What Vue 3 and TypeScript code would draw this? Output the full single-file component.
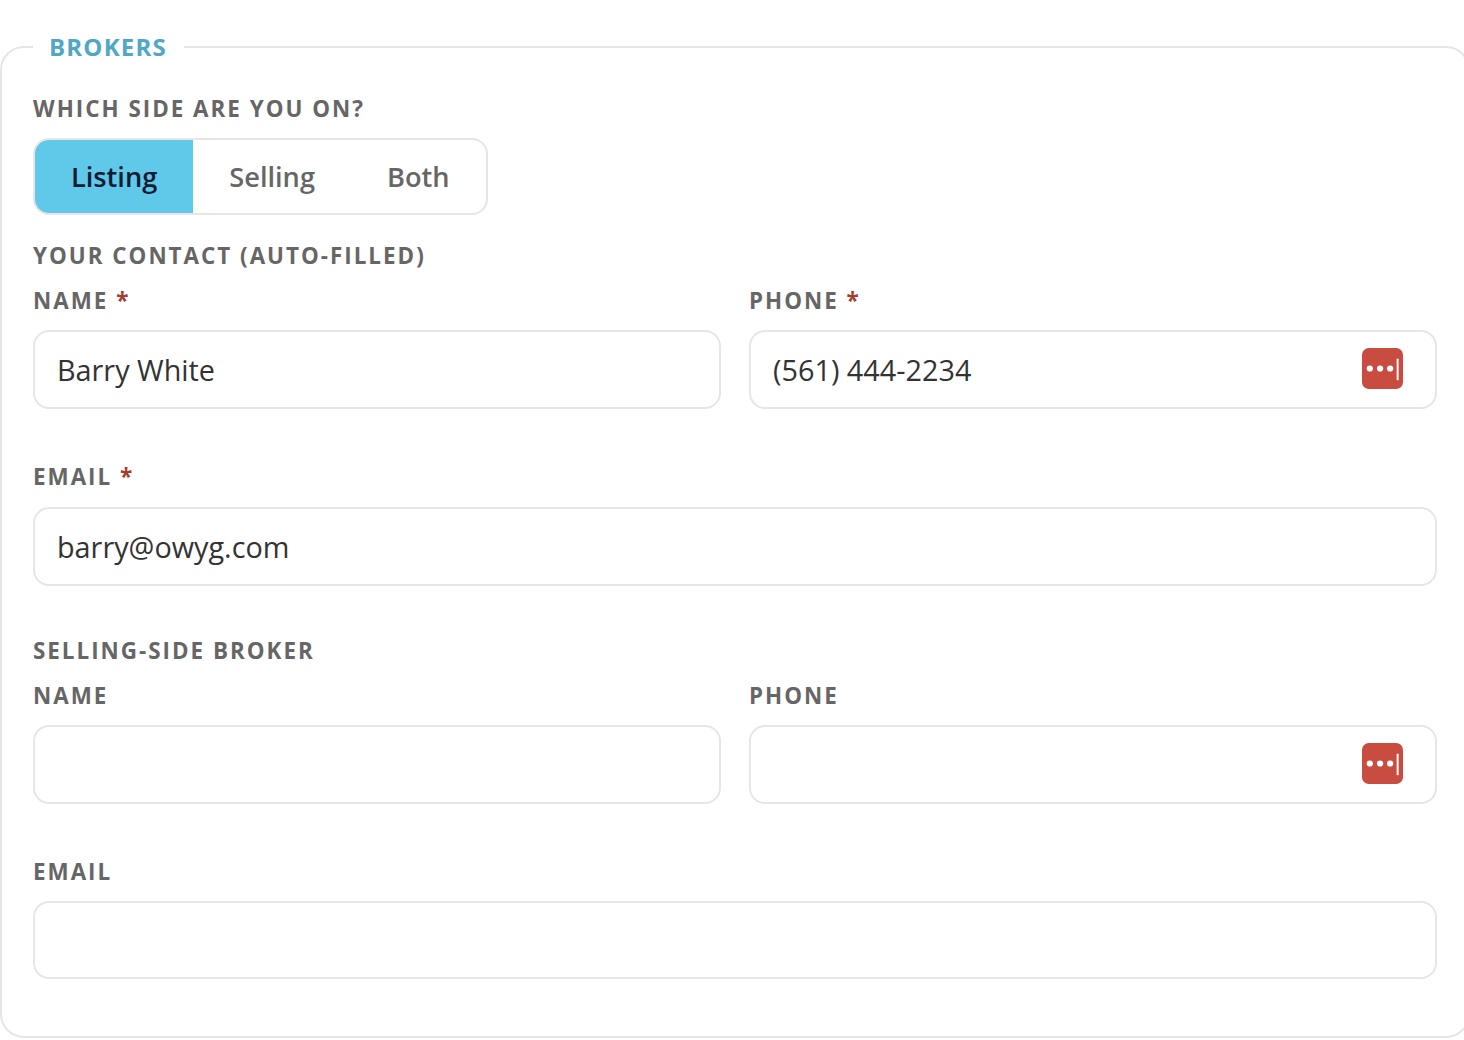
<script setup lang="ts">
const sides: string[] = ['Listing', 'Selling', 'Both']
</script>

<template>
  <div class="page">
    <fieldset class="panel">
      <legend class="legend">BROKERS</legend>
      <div class="label side-label">WHICH SIDE ARE YOU ON?</div>
      <div class="toggle">
        <span v-for="(s, i) in sides" :key="s" class="opt" :class="{ active: i === 0 }">{{ s }}</span>
      </div>

      <div class="label group">YOUR CONTACT (AUTO-FILLED)</div>
      <div class="row">
        <div class="field">
          <div class="label">NAME <span class="req">*</span></div>
          <div class="input">Barry White</div>
        </div>
        <div class="field">
          <div class="label">PHONE <span class="req">*</span></div>
          <div class="input">(561) 444-2234
            <svg class="lp" viewBox="0 0 42 42"><rect width="42" height="42" rx="7" fill="#c94c41"/><circle cx="8" cy="21" r="3.200" fill="#fff"/><circle cx="18.500" cy="21" r="3.200" fill="#fff"/><circle cx="28.800" cy="21" r="3.200" fill="#fff"/><rect x="35.500" y="11" width="2" height="22" fill="#fff"/></svg>
          </div>
        </div>
      </div>
      <div class="field wide first-email">
        <div class="label">EMAIL <span class="req">*</span></div>
        <div class="input">barry@owyg.com</div>
      </div>

      <div class="label group second">SELLING-SIDE BROKER</div>
      <div class="row">
        <div class="field">
          <div class="label">NAME</div>
          <div class="input"></div>
        </div>
        <div class="field">
          <div class="label">PHONE</div>
          <div class="input">
            <svg class="lp" viewBox="0 0 42 42"><rect width="42" height="42" rx="7" fill="#c94c41"/><circle cx="8" cy="21" r="3.200" fill="#fff"/><circle cx="18.500" cy="21" r="3.200" fill="#fff"/><circle cx="28.800" cy="21" r="3.200" fill="#fff"/><rect x="35.500" y="11" width="2" height="22" fill="#fff"/></svg>
          </div>
        </div>
      </div>
      <div class="field wide">
        <div class="label">EMAIL</div>
        <div class="input"></div>
      </div>
    </fieldset>
  </div>
</template>

<style>
html, body { margin: 0; background: #fff; overflow: hidden; }
</style>

<style scoped>
.page {
  width: 1464px;
  height: 1040px;
  overflow: hidden;
  font-family: "Open Sans", sans-serif;
  background: #fff;
  padding-top: 32px;
  box-sizing: border-box;
}
.panel {
  width: 1470px;
  height: 1006px;
  box-sizing: border-box;
  margin: 0;
  padding: 0 31px 0 31px;
  border: 2px solid #e6e6e6;
  border-radius: 24px;
}
.legend {
  margin-left: 0;
  padding: 0 17px 0 16px;
  font-size: 24px;
  line-height: 30px;
  font-weight: 700;
  letter-spacing: 1.2px;
  color: #4fa8c5;
}
.label {
  font-size: 22.4px;
  line-height: 30px;
  font-weight: 700;
  letter-spacing: 2px;
  color: #666;
  white-space: nowrap;
}
.side-label { margin-top: 32px; }
.req { color: #a93a2e; }
.toggle {
  display: flex;
  width: 455px;
  height: 77px;
  margin-top: 14px;
  box-sizing: border-box;
  border: 2px solid #e6e6e6;
  border-radius: 16px;
  overflow: hidden;
}
.opt {
  display: flex;
  align-items: center;
  justify-content: center;
  padding: 0 36px;
  font-size: 27.2px;
  font-weight: 600;
  color: #666;
}
.opt.active { background: #60c8e8; color: #0d1b33; }
.group { margin-top: 26px; }
.group.second { margin-top: 50px; }
.row {
  display: grid;
  grid-template-columns: 688px 688px;
  gap: 28px;
  margin-top: 15px;
}
.field .label { height: 30px; }
.input {
  position: relative;
  display: flex;
  align-items: center;
  height: 79px;
  margin-top: 14px;
  padding: 0 22px;
  box-sizing: border-box;
  border: 2px solid #e6e6e6;
  border-radius: 16px;
  font-size: 28.8px;
  color: #333;
}
.wide { width: 1404px; margin-top: 53px; }
.wide:not(.first-email) .input { height: 78px; }
.wide.first-email .input { margin-top: 15px; }
.lp {
  position: absolute;
  right: 32px;
  top: 16px;
  width: 41px;
  height: 41px;
}
</style>
